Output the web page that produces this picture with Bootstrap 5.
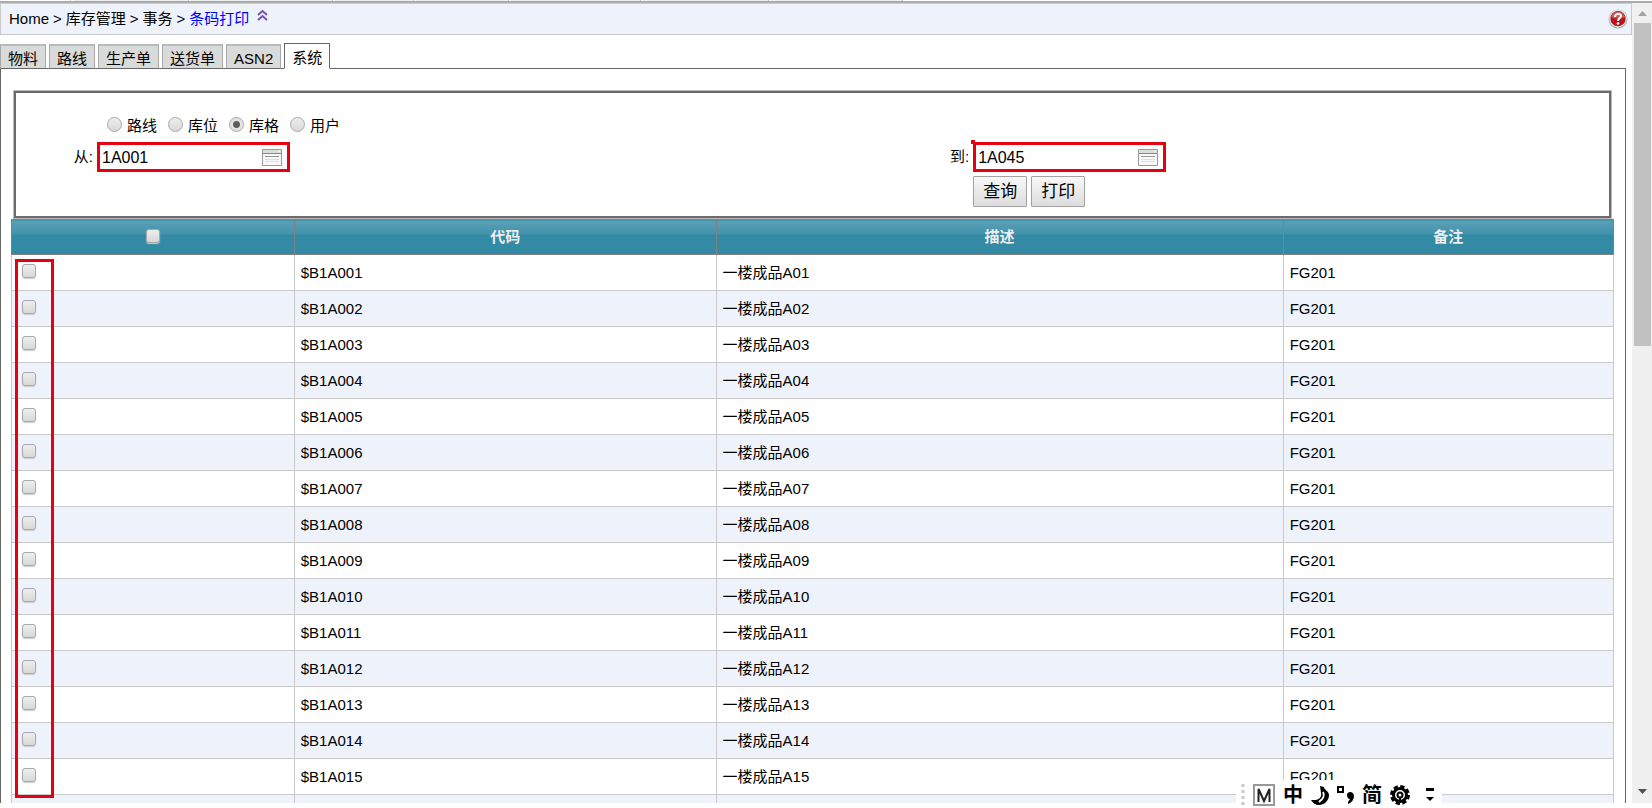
<!DOCTYPE html>
<html lang="zh-CN">
<head>
<meta charset="utf-8">
<meta name="viewport" content="width=device-width, initial-scale=1">
<title>条码打印</title>
<link href="https://cdn.jsdelivr.net/npm/bootstrap@5.3.0/dist/css/bootstrap.min.css" rel="stylesheet">
<style>
body{font-family:"Liberation Sans","Noto Sans CJK SC",sans-serif;font-size:15px;line-height:20px;color:#000;background:#fff}
.app{height:100vh;padding-bottom:5px}
.topstrip{height:3px;gap:2px;border-bottom:2px solid #a9acab}
.topstrip i{background:#ecefee;border-right:1px solid #c4c4c4}
.topstrip i:first-child{background:#fff}
.crumbs{height:32px;background:#eef2fb;border:1px solid #c8c8c8;border-top-color:#ccc;padding:0 3px 0 8px}
.crumbs a{color:#000;text-decoration:none}
.crumbs a.here{color:#00f}
.helpbtn{width:20px;height:20px}
.tabs{gap:3px;margin-top:8px;margin-bottom:-1px}
.tabs .nav-link{color:#000;background:#d9dada;border:1px solid #a8a8a8;border-top:2px solid #bababa;border-bottom:1px solid #666;border-radius:0;padding:2px 7px;height:25px;line-height:22px}
.tabs .nav-link.active{background:#fff;border:1px solid #666;border-bottom-color:#fff;height:26px;padding-top:3px;color:#000;position:relative}
.panel{border:1px solid #666;border-bottom:0;margin-right:6px;padding:22px 11px 0 10px}
.filter{border:2px solid #6b6b6d;outline:1px solid #bbb;margin:0 3px 1px;padding:19px 0 8px;height:127px}
.radios{gap:11px;padding-left:91px;height:24px}
.radios label{gap:5px}
.radios span{padding-top:3px}
input[type=radio],input[type=checkbox]{appearance:none;margin:0;flex:none;border:1px solid #a9a9a9;background:linear-gradient(#eee,#d8d8d8)}
input[type=radio]{width:15px;height:15px;border-radius:50%}
input[type=radio]:checked{background:radial-gradient(circle,#5c5c5c 3px,#e2e2e2 4px)}
input[type=checkbox]{width:14px;height:14px;border-radius:3px;box-shadow:0 1px 1px #ccc;display:block}
.fields{display:grid;grid-template-columns:55fr 45fr;row-gap:4px;margin-top:6px}
.lbl{width:81px;padding-right:4px;text-align:right}
.pick{width:193px;height:30px;border:3px solid #e60012;padding-right:5px;background:#fff}
.pick input{border:0;outline:0;background:none;font-size:16px;padding:1px 2px 0;min-width:0;flex:1}
.pick button{border:0;background:none;padding:0;display:flex}
.corner{left:-5px;top:-5px;width:4px;height:4px;background:#e60012}
.go{font-size:17px;line-height:21px;color:#000;border:1px solid #a2a2a2;border-radius:1px;background:linear-gradient(#f8f8f8,#dcdcdc);padding:4px 9px}
.grid{width:100%;table-layout:fixed;border-collapse:collapse}
.grid th,.grid td{height:36px;border:1px solid #c9c9c9;padding:0 6px}
.grid th{height:35px;border-color:#808080;color:#eee;text-align:center;background:linear-gradient(#5aa1b8,#4391aa 40%,#338aa5 41%,#338aa5)}
.grid th input{margin:0 auto 2px}
.grid td input{margin:0 0 3px 4px}
.grid tbody tr:nth-child(even){background:#eef2fb}
.markbox{left:4px;top:40px;width:39px;height:539px;border:3px solid #e60012;pointer-events:none}
.scroller{width:20px;background:#f0f0f0;padding:0 1px 0 2px}
.thumb{height:40.4%;background:#c1c1c1}
.scroller svg{display:block}
.ime{right:210px;bottom:0;height:28px;width:206px;background:#fff;padding:1px 8px 0 5px;font-size:20px;font-weight:700}
</style>
</head>
<body class="overflow-hidden">
<div class="app d-flex flex-column overflow-hidden">
  <div class="topstrip d-flex flex-shrink-0"><i style="width:4.3%"></i><i style="width:7%"></i><i style="width:8.6%"></i><i style="width:4.8%"></i><i style="width:5.6%"></i><i style="width:7.9%"></i><i style="width:7.6%"></i><i style="width:8%"></i></div>
  <div class="d-flex flex-grow-1 overflow-hidden">
    <main class="flex-grow-1 overflow-hidden">
      <header class="crumbs d-flex align-items-center">
        <nav class="d-flex gap-1" aria-label="路径"><a href="#">Home</a><span>&gt;</span><a href="#">库存管理</a><span>&gt;</span><a href="#">事务</a><span>&gt;</span><a href="#" class="here">条码打印</a></nav>
        <a href="#" class="ms-2 mb-2 d-flex" aria-label="收起"><svg width="11" height="12" viewBox="0 0 11 12" fill="none" stroke="#7a4fb5" stroke-width="2"><path d="M1 6l4.500-4 4.500 4M1 11l4.500-4 4.500 4"/></svg></a>
        <a href="#" class="helpbtn ms-auto" aria-label="帮助"><svg class="d-block" width="20" height="20" viewBox="0 0 20 20"><circle cx="10" cy="10" r="9.500" fill="#aaa"/><circle cx="10" cy="9.500" r="9" fill="#e5e5e5"/><circle cx="10" cy="9.700" r="7.600" fill="#b31820"/><path d="M3 8a7.300 7.300 0 0 1 14 0q-7 3-14 0" fill="#cf5a55"/><path d="M7 8c0-4 6-4 6-1 0 2-3 2-3 5" fill="none" stroke="#fff" stroke-width="2"/><circle cx="10" cy="14.500" r="1.300" fill="#fff"/></svg></a>
      </header>
      <nav class="tabs nav align-items-end flex-nowrap">
        <a class="nav-link" href="#">物料</a><a class="nav-link" href="#">路线</a><a class="nav-link" href="#">生产单</a><a class="nav-link" href="#">送货单</a><a class="nav-link" href="#">ASN2</a><a class="nav-link active" href="#" aria-current="page">系统</a>
      </nav>
      <section class="panel">
        <form class="filter" onsubmit="return false">
          <div class="radios d-flex">
            <label class="d-flex align-items-center"><input type="radio" name="kind"><span>路线</span></label>
            <label class="d-flex align-items-center"><input type="radio" name="kind"><span>库位</span></label>
            <label class="d-flex align-items-center"><input type="radio" name="kind" checked><span>库格</span></label>
            <label class="d-flex align-items-center"><input type="radio" name="kind"><span>用户</span></label>
          </div>
          <div class="fields">
            <div class="d-flex align-items-center"><label class="lbl" for="from">从:</label>
              <div class="pick d-flex align-items-center"><input id="from" type="text" value="1A001"><button type="button" aria-label="选择"><svg width="20" height="17" viewBox="0 0 20 17"><path d="M.5.5h19v16H.5z" fill="#f8f8f8" stroke="#999"/><path d="M1 1h18v3H1z" fill="#ddd"/><path d="M1 4.500h18" stroke="#888"/><path d="M3 7.500h14" stroke="#999"/><path d="M3 10.500h14M3 12.500h14" stroke="#ddd"/><path d="M16 2h2" stroke="#fff"/></svg></button></div></div>
            <div class="d-flex align-items-center"><label class="lbl" for="to">到:</label>
              <div class="pick d-flex align-items-center position-relative"><span class="corner position-absolute"></span><input id="to" type="text" value="1A045"><button type="button" aria-label="选择"><svg width="20" height="17" viewBox="0 0 20 17"><path d="M.5.5h19v16H.5z" fill="#f8f8f8" stroke="#999"/><path d="M1 1h18v3H1z" fill="#ddd"/><path d="M1 4.500h18" stroke="#888"/><path d="M3 7.500h14" stroke="#999"/><path d="M3 10.500h14M3 12.500h14" stroke="#ddd"/><path d="M16 2h2" stroke="#fff"/></svg></button></div></div>
            <div></div>
            <div class="d-flex"><span class="lbl"></span><button class="go me-1" type="button">查询</button><button class="go" type="button">打印</button></div>
          </div>
        </form>
        <div class="position-relative">
          <table class="grid">
            <colgroup><col style="width:17.65%"><col style="width:26.33%"><col style="width:35.4%"><col style="width:20.62%"></colgroup>
            <thead><tr><th><input type="checkbox" aria-label="全选"></th><th>代码</th><th>描述</th><th>备注</th></tr></thead>
            <tbody id="rows"></tbody>
          </table>
          <div class="markbox position-absolute"></div>
        </div>
      </section>
    </main>
    <div class="scroller flex-shrink-0 d-flex flex-column" aria-hidden="true">
      <svg width="17" height="20" viewBox="0 0 17 20"><path d="M4 13l4.500-5 4.500 5z" fill="#a3a3a3"/></svg>
      <div class="thumb"></div>
      <svg class="mt-auto" width="17" height="20" viewBox="0 0 17 20"><path d="M4 6l4.500 5 4.500-5z" fill="#505050"/></svg>
    </div>
  </div>
</div>
<div class="ime position-fixed d-flex align-items-center justify-content-between">
  <svg width="4" height="26" viewBox="0 0 4 26"><path d="M2 2v24" stroke="#c8c8c8" stroke-width="3" stroke-dasharray="3 3"/></svg>
  <svg width="22" height="22" viewBox="0 0 22 22" fill="none"><path d="M1 1h20v20H1z" stroke="#999" stroke-width="2"/><path d="M5.500 18V5l5.500 12 5.500-12v13" stroke="#222" stroke-width="2"/></svg>
  <span>中</span>
  <svg width="18" height="20" viewBox="0 0 18 20"><path d="M9 1l4 1c0 3 5 4 5 8 0 6-5 10-10 10-4 0-6-2-8-5h5c4-1 6-4 5-7z"/><path d="M12 7c2 3 0 7-4 10" fill="none" stroke="#fff" stroke-width="2"/></svg>
  <svg width="17" height="20" viewBox="0 0 17 20"><path d="M1 2h5v5H1z" fill="none" stroke="#000" stroke-width="2"/><path d="M10 10c0-4 7-4 7 1 0 4-3 7-6 8v-2l2-3c-2 0-3-2-3-4z"/></svg>
  <span>简</span>
  <svg width="20" height="20" viewBox="0 0 20 20" fill="none" stroke="#000"><circle cx="10" cy="10" r="8" stroke-width="4" stroke-dasharray="4 2.280"/><circle cx="10" cy="10" r="6.500" stroke-width="3"/><circle cx="10" cy="10" r="2.500" stroke-width="2"/><path d="M10 12v5" stroke-width="2"/></svg>
  <svg class="ms-2" width="8" height="16" viewBox="0 0 8 16"><path d="M0 1h8v3H0zM0 10h8l-4 4z"/></svg>
</div>
<script>
// fifteen records, then an empty striped row that runs on below the fold
document.getElementById('rows').innerHTML = Array.from({length: 15}, (_, i) => {
  const n = String(i + 1).padStart(2, '0');
  return `<tr><td><input type="checkbox" aria-label="$B1A0${n}"></td><td>$B1A0${n}</td><td>一楼成品A${n}</td><td>FG201</td></tr>`;
}).join('') + '<tr><td></td><td></td><td></td><td></td></tr>';
</script>
<script src="https://cdn.jsdelivr.net/npm/bootstrap@5.3.0/dist/js/bootstrap.bundle.min.js"></script>
</body>
</html>
